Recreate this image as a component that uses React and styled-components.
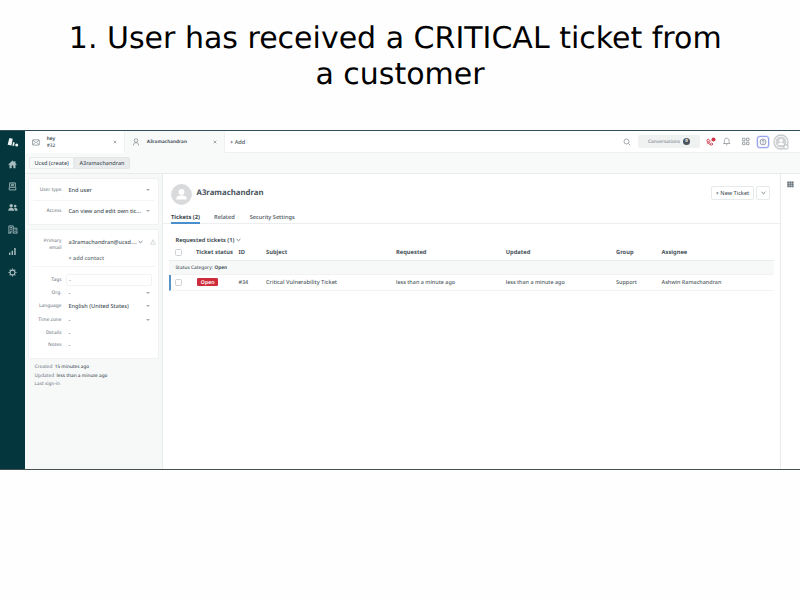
import React from 'react';
import styled, { createGlobalStyle } from 'styled-components';

const Global = createGlobalStyle`
  *, *::before, *::after { box-sizing: border-box; }
  body { margin: 0; background: #fefefe; }
`;

const Slide = styled.main`
  width: 800px;
  height: 600px;
  overflow: hidden;
  background: #fefefe;
  text-rendering: geometricPrecision;
`;
const Title = styled.h1`
  margin: 0;
  height: 130px;
  padding-top: 21px;
  font: 400 30px/36px "DejaVu Sans", sans-serif;
  color: #000;
  text-align: center;
`;
const AppFrame = styled.section`
  display: flex;
  height: 340px;
  border-top: 1px solid #2f4e58;
  border-bottom: 1px solid #45514f;
  background: #fff;
  font-family: "Noto Sans", sans-serif;
  color: #3c4850;
`;
const Rail = styled.nav`
  width: 25px;
  flex: none;
  display: flex;
  flex-direction: column;
  align-items: center;
  padding-top: 1px;
  background: #03363d;
`;
const RailItem = styled.span`
  height: 21.7px;
  display: flex;
  align-items: center;
  justify-content: center;
  svg { display: block; }
`;
const Work = styled.div`
  flex: 1;
  min-width: 0;
  display: flex;
  flex-direction: column;
`;
const Text = styled.span`
  display: block;
  white-space: nowrap;
  font-size: ${p => p.$size || 5.6}px;
  font-weight: ${p => p.$weight || 500};
  line-height: ${p => p.$line || 8}px;
  color: ${p => p.$color || '#4a555d'};
`;

const TopBar = styled.header`
  height: 22px;
  flex: none;
  display: flex;
  border-bottom: 1px solid #eff1f1;
`;
const Tab = styled.div`
  width: ${p => p.$width}px;
  height: 22px;
  display: flex;
  align-items: center;
  padding: 0 7px 0 7px;
  background: ${p => (p.$active ? '#f8f9f9' : '#fff')};
  border-right: 1px solid #f0f2f2;
`;
const TabIcon = styled.span`
  width: ${p => p.$width}px;
  display: flex;
  svg { display: block; }
`;
const TabLabel = styled.div`
  flex: 1;
  padding-top: ${p => p.$drop || 0}px;
`;
const AddTab = styled.div`
  flex: 1;
  display: flex;
  align-items: center;
  padding-left: 5px;
`;
const Tools = styled.div`
  display: flex;
  align-items: center;
  width: 177px;
  svg { display: block; flex: none; }
`;
const Conversations = styled.div`
  width: 62px;
  height: 13px;
  margin: 0 6px 0 7px;
  padding-left: 10px;
  display: flex;
  align-items: center;
  gap: 3px;
  border-radius: 2px;
  background: #f0f2f2;
`;
const Count = styled.span`
  width: 7px;
  height: 7px;
  border-radius: 50%;
  background: #49545c;
  color: #fff;
  font-size: 4.5px;
  font-weight: 700;
  line-height: 7px;
  text-align: center;
`;
const Help = styled.span`
  width: 12px;
  height: 12px;
  margin: 0 0 0 7px;
  display: flex;
  align-items: center;
  justify-content: center;
  border: 1px solid #98a2ea;
  border-radius: 3px;
  box-shadow: 0 0 0 .6px #c9cef5;
  background: #fbfbff;
`;
const CrumbBar = styled.div`
  height: 21px;
  flex: none;
  padding: 4px 4px;
  display: flex;
  background: #f8f9f9;
  border-bottom: 1px solid #e8ebeb;
`;
const Crumb = styled.div`
  width: ${p => p.$width}px;
  height: 12px;
  padding: 1px 0 0 4.5px;
  border: 1px solid ${p => (p.$active ? '#e3e6e7' : '#e9ebed')};
  border-radius: ${p => (p.$active ? '0 2px 2px 0' : '2px 0 0 2px')};
  background: ${p => (p.$active ? '#e9ebed' : '#f9fafa')};
`;
const Body = styled.div`
  flex: 1;
  display: flex;
  min-height: 0;
`;
const Profile = styled.aside`
  width: 138px;
  flex: none;
  padding: 4px 3px 0;
  background: #f7f9f9;
  border-right: 1px solid #e9eced;
`;
const Card = styled.div`
  width: 131px;
  height: ${p => p.$height}px;
  margin-bottom: 4px;
  padding-top: ${p => p.$top || 0}px;
  border: 1px solid #eff1f2;
  border-radius: 2px;
  background: #fff;
`;
const Field = styled.div`
  height: ${p => p.$height}px;
  margin: 0 4px;
  padding-top: ${p => p.$drop || 0}px;
  display: flex;
  align-items: center;
  border-bottom: ${p => (p.$line ? '1px solid #f3f5f5' : '0')};
`;
const FieldName = styled(Text)`
  width: 28.5px;
  margin-right: 7px;
  flex: none;
  text-align: right;
  white-space: normal;
`;
const FieldValue = styled.div`
  flex: 1;
  display: flex;
  align-items: center;
  min-width: 0;
`;
const Caret = styled.i`
  margin-right: 4px;
  border: solid transparent;
  border-width: 2px 2px 0;
  border-top-color: #a3abb1;
`;
const TagBox = styled.div`
  width: 86px;
  height: 12px;
  flex: none;
  margin-left: -2.5px;
  padding: 1px 2px;
  border: 1px solid #f1f3f4;
  border-radius: 2px;
`;
const EmailBlock = styled.div`
  display: flex;
  height: 29.5px;
  margin: 0 3px 0 4px;
  border-bottom: 1px solid #f3f5f5;
`;
const EmailLines = styled.div`flex: 1;`;
const EmailLine = styled.div`
  height: 16px;
  display: flex;
  svg { display: block; flex: none; margin: 2.5px 0 0 1.5px; }
  svg + svg { margin: 1.5px 0 0 7px; }
`;
const Meta = styled.div`
  display: flex;
  height: 8.3px;
  gap: 2.3px;
  padding-left: 6.5px;
`;
const MetaList = styled.div`padding-top: .4px;`;

const Main = styled.section`
  flex: 1;
  min-width: 0;
`;
const PersonBar = styled.div`
  display: flex;
  height: 37px;
  padding: 10px 10px 0 8px;
  svg { display: block; flex: none; }
`;
const PersonName = styled(Text)`
  flex: 1;
  padding: 2.5px 0 0 4.5px;
`;
const Button = styled.div`
  width: ${p => p.$width}px;
  height: 14px;
  margin: 2px 0 0 ${p => p.$gap || 0}px;
  display: flex;
  align-items: center;
  justify-content: center;
  border: 1px solid #e7eaeb;
  border-radius: 2px;
`;
const Tabs = styled.div`
  display: flex;
  height: 13px;
  padding-left: 8px;
  border-bottom: 1px solid #eceeef;
`;
const SubTab = styled.div`
  height: 13px;
  width: ${p => p.$width}px;
  margin-right: ${p => p.$gap}px;
  padding-top: 2px;
  border-bottom: ${p => (p.$active ? '2px solid #4a8fcb' : '0')};
`;
const Tickets = styled.div`padding: 11px 6px 0 6px;`;
const TicketsTitle = styled.div`
  display: flex;
  align-items: center;
  gap: 2px;
  padding-left: 6.5px;
  height: 9px;
`;
const TicketRow = styled.div`
  display: grid;
  grid-template-columns: 20.5px 42.5px 27.5px 130px 109.7px 110.3px 45.6px 1fr;
  align-items: center;
  height: ${p => p.$height}px;
  border-bottom: 1px solid ${p => (p.$soft ? '#f2f4f4' : '#e9eced')};
  border-left: ${p => (p.$marked ? '2px solid #5a93c6' : '0')};
  padding-left: ${p => (p.$marked ? 4.5 : 6.5)}px;
  padding-bottom: ${p => p.$lift || 0}px;
`;
const Checkbox = styled.span`
  width: 7px;
  height: 7px;
  margin-left: -.6px;
  border: 1px solid #cdd2d5;
  border-radius: 1.5px;
`;
const Badge = styled.span`
  width: 21px;
  height: 8.5px;
  margin-left: 1.2px;
  border-radius: 1.3px;
  background: #cf2c3b;
  color: #fff;
  font-size: 5.2px;
  font-weight: 600;
  line-height: 8.2px;
  text-align: center;
`;
const GroupRow = styled.div`
  display: flex;
  gap: 1.5px;
  height: 14px;
  padding: 2.5px 0 0 6.5px;
  background: #f7f9f9;
  border-bottom: 1px solid #f1f3f3;
`;
const AppsRail = styled.aside`
  width: 20px;
  flex: none;
  padding: 6.5px 0 0 6px;
  border-left: 1px solid #e9ebed;
  svg { display: block; }
`;

const muted = '#7d8790';
const iconInk = '#7c868d';

const Chevron = () => (
  <svg width="5" height="4" viewBox="0 0 5 4" fill="none" stroke="#59646c" strokeWidth=".8"><path d="M.6 1l1.9 1.8L4.4 1" /></svg>
);
const Cross = () => (
  <svg width="4" height="4" viewBox="0 0 4 4" stroke="#6b757c" strokeWidth=".6"><path d="M.7.7l2.6 2.6M3.3.7L.7 3.3" /></svg>
);
const Avatar = ({ size }) => (
  <svg width={size} height={size} viewBox="0 0 21 21">
    <circle cx="10.5" cy="10.5" r="10.4" fill="#d9dadb" />
    <circle cx="10.5" cy="8" r="2.9" fill="#fff" />
    <path d="M5.4 15.5v-1.2c0-2 2-2.9 3.4-2.9h3.4c1.5 0 3.4.9 3.4 2.9v1.2z" fill="#fff" />
  </svg>
);

const railIcons = [
  <svg width="13" height="11" viewBox="0 0 13 11" fill="#eef3f3"><path d="M3.400 1l3.300.7-1.200 6.800-3.900-.7z" /><path d="M7 5.100l1.700.4-.6 3.600-1.700-.4z" /><circle cx="10.700" cy="7.900" r="1.500" /></svg>,
  <svg width="9" height="9" viewBox="0 0 9 9" fill="#a9bcbe"><path d="M4.500.6L.3 4.400l.6.700.6-.5v3.600h2.200V5.600h1.600v2.600h2.200V4.600l.6.500.6-.7L7.400 3.100V1.300H6.200v.8z" /></svg>,
  <svg width="9" height="9" viewBox="0 0 9 9" fill="none" stroke="#a9bcbe" strokeWidth=".9"><path d="M1.700.9h5.600v4.400H1.700zM3 2.300h3M3 3.700h3" /><path d="M1.200 5.300v2.600h6.600V5.300" /></svg>,
  <svg width="10" height="9" viewBox="0 0 10 9" fill="#a9bcbe"><circle cx="3.200" cy="2.700" r="1.700" /><path d="M.3 7.700c0-2 1.200-2.900 2.900-2.900s2.900.9 2.900 2.900z" /><circle cx="7.200" cy="3" r="1.300" /><path d="M6.800 7.700c0-1.200-.2-2-.7-2.700 2-.7 3.500.4 3.500 2.700z" /></svg>,
  <svg width="10" height="9" viewBox="0 0 10 9" fill="none" stroke="#a9bcbe" strokeWidth=".9"><path d="M.9 8V.9h4.300V8M5.200 3.200h3.700V8M.3 8.100h3M5 8.100h4.500M2.100 2.500h2M2.100 4.200h2M2.800 8V6h1M6.500 4.900h1.200M6.500 6.400h1.200" /></svg>,
  <svg width="9" height="9" viewBox="0 0 9 9" fill="#a9bcbe"><path d="M1 5.600h1.400V8H1zM3.600 3.800H5V8H3.600zM6.200 1.100h1.500V8H6.200z" /></svg>,
  <svg width="9" height="9" viewBox="0 0 9 9" fill="none" stroke="#a9bcbe"><circle cx="4.500" cy="4.500" r="2.400" strokeWidth="1.100" /><path strokeWidth="1.200" d="M4.500.5v1.300M4.500 7.200v1.300M.5 4.500h1.300M7.200 4.500h1.300M1.700 1.700l.9.9M6.400 6.400l.9.9M7.300 1.700l-.9.9M2.600 6.400l-.9.9" /></svg>,
];

const fields = [
  { name: 'Org.', height: 13, caret: true },
  { name: 'Language', height: 13.4, value: 'English (United States)', caret: true },
  { name: 'Time zone', height: 13.4, caret: true },
  { name: 'Details', height: 12.7 },
  { name: 'Notes', height: 12.4 },
];
const headings = ['Ticket status', 'ID', 'Subject', 'Requested', 'Updated', 'Group', 'Assignee'];
const cells = ['#34', 'Critical Vulnerability Ticket', 'less than a minute ago', 'less than a minute ago', 'Support', 'Ashwin Ramachandran'];

const SideField = ({ name, value = '-', caret, ...rest }) => (
  <Field {...rest}>
    <FieldName $size={4.75} $color={muted}>{name}</FieldName>
    <FieldValue><Text $size={5.6}>{value}</Text></FieldValue>
    {caret && <Caret />}
  </Field>
);

export default function App() {
  return (
    <Slide>
      <Global />
      <Title>1. User has received a CRITICAL ticket from&nbsp;<br />a customer</Title>
      <AppFrame>
        <Rail>{railIcons.map((icon, i) => <RailItem key={i}>{icon}</RailItem>)}</Rail>
        <Work>
          <TopBar>
            <Tab $width={100}>
              <TabIcon $width={14.7}>
                <svg width="8" height="7" viewBox="0 0 8 7" fill="none" stroke={iconInk} strokeWidth=".7"><rect x=".5" y=".8" width="6.800" height="5.300" rx=".6" /><path d="M.7 1.200l3.200 2.500L7.100 1.200M.8 5.800l2-2M7 5.800l-2-2" /></svg>
              </TabIcon>
              <TabLabel $drop={1.4}>
                <Text $size={4.75} $weight={700} $line={7}>hey</Text>
                <Text $size={4.75} $line={7}>#32</Text>
              </TabLabel>
              <Cross />
            </Tab>
            <Tab $width={100} $active>
              <TabIcon $width={14.7}>
                <svg width="8" height="8" viewBox="0 0 8 8" fill="none" stroke={iconInk} strokeWidth=".7"><circle cx="4" cy="2.500" r="1.800" /><path d="M1.400 7.500V7c0-1.500 1-2.300 2.600-2.300S6.600 5.500 6.600 7v.5" /></svg>
              </TabIcon>
              <TabLabel><Text $size={4.69} $weight={700}>A3ramachandran</Text></TabLabel>
              <Cross />
            </Tab>
            <AddTab><Text>+ Add</Text></AddTab>
            <Tools>
              <svg width="8" height="8" viewBox="0 0 8 8" fill="none" stroke={iconInk} strokeWidth=".7"><circle cx="3.500" cy="3.500" r="2.500" /><path d="M5.400 5.400l2 2" /></svg>
              <Conversations><Text $size={4.7} $color="#7f8990">Conversations</Text><Count>0</Count></Conversations>
              <svg width="11" height="10" viewBox="0 0 11 10" fill="none" stroke="#d0485a"><path strokeWidth="1" d="M.8 3.200c.6 2.600 2.300 4.400 5 5l1.200-1.200-1.500-1-.9.600C3.700 6 3.200 5.400 2.800 4.500l.6-.9-1-1.500z" /><path strokeWidth=".7" d="M.8 7L5.500 3.200" /><circle cx="7.500" cy="2.600" r="2" fill="#cf3346" stroke="none" /></svg>
              <svg width="18" height="9" viewBox="-5.500 0 18 9" fill="none" stroke={iconInk} strokeWidth=".7"><path d="M1 6.500h6.400c-.9-.7-.9-1.500-.9-2.900 0-1.500-.9-2.400-2.300-2.400S1.900 2.100 1.900 3.600c0 1.400 0 2.200-.9 2.900zM3.500 7.800h1.400" /></svg>
              <svg width="14.500" height="9" viewBox="-7 0 14.500 9" fill="none" stroke={iconInk} strokeWidth=".7"><path d="M.5 1.200h2.500v2.500H.5zM4.500 1.200h2.500v2.500H4.500zM.5 5.200h2.500v2.500H.5zM4.500 5.200h2.500v2.500H4.500z" /></svg>
              <Help>
                <svg width="8" height="8" viewBox="0 0 8 8" fill="none" stroke="#66717d" strokeWidth=".65"><circle cx="4" cy="4" r="2.900" /><path d="M3.100 3.400c0-1.300 1.800-1.200 1.800 0 0 .6-.9.700-.9 1.300M4 5.300v.6" /></svg>
              </Help>
              <svg width="21" height="18" viewBox="-3 0 21 18"><circle cx="9" cy="9" r="7" fill="#fff" stroke="#c5cacd" strokeWidth="1.300" /><circle cx="9" cy="9" r="5.500" fill="#d0d2d3" /><circle cx="9" cy="7.500" r="1.700" fill="#fff" /><path d="M6 12c0-1.700 1.300-2.300 3-2.300s3 .6 3 2.300z" fill="#fff" /><circle cx="14" cy="14" r="2.200" fill="#fff" stroke="#a5acb1" strokeWidth=".8" /></svg>
            </Tools>
          </TopBar>
          <CrumbBar>
            <Crumb $width={45}><Text $size={5.53}>Ucsd (create)</Text></Crumb>
            <Crumb $width={56} $active><Text $size={5.45}>A3ramachandran</Text></Crumb>
          </CrumbBar>
          <Body>
            <Profile>
              <Card $height={47}>
                <SideField name="User type" value="End user" $height={22} $line caret />
                <SideField name="Access" value="Can view and edit own tic..." $height={20.5} caret />
              </Card>
              <Card $height={130} $top={7.5}>
                <EmailBlock>
                  <FieldName $size={4.7} $color={muted} $line={7}>Primary email</FieldName>
                  <EmailLines>
                    <EmailLine>
                      <Text $size={5.53}>a3ramachandran@ucsd....</Text>
                      <Chevron />
                      <svg width="6" height="6" viewBox="0 0 6 6" fill="none" stroke="#ccd0d3" strokeWidth=".7"><path d="M3 .7L5.500 5.300H.5zM3 2.200v1.500" /></svg>
                    </EmailLine>
                    <Text $size={5.5} $color="#626d75">+ add contact</Text>
                  </EmailLines>
                </EmailBlock>
                <Field $height={19.5} $drop={6}>
                  <FieldName $size={4.75} $color={muted}>Tags</FieldName>
                  <FieldValue><TagBox><Text $color={muted}>-</Text></TagBox></FieldValue>
                </Field>
                {fields.map(f => <SideField key={f.name} name={f.name} value={f.value} caret={f.caret} $height={f.height} />)}
              </Card>
              <MetaList>
                <Meta><Text $size={4.79} $color={muted}>Created</Text><Text $size={4.67}>15 minutes ago</Text></Meta>
                <Meta><Text $size={4.79} $color={muted}>Updated</Text><Text $size={4.69}>less than a minute ago</Text></Meta>
                <Meta><Text $size={4.67} $color={muted}>Last sign-in</Text></Meta>
              </MetaList>
            </Profile>
            <Main>
              <PersonBar>
                <Avatar size={21} />
                <PersonName $size={7.8} $weight={700} $line={12}>A3ramachandran</PersonName>
                <Button $width={43}><Text $size={5.52}>+ New Ticket</Text></Button>
                <Button $width={14} $gap={2}><Chevron /></Button>
              </PersonBar>
              <Tabs>
                <SubTab $width={29} $gap={14} $active><Text $size={5.74} $weight={700} $color="#38444c">Tickets (2)</Text></SubTab>
                <SubTab $width={21} $gap={14.7}><Text $size={5.79}>Related</Text></SubTab>
                <SubTab $width={45}><Text $size={5.63}>Security Settings</Text></SubTab>
              </Tabs>
              <Tickets>
                <TicketsTitle><Text $size={5.64} $weight={700}>Requested tickets (1)</Text><Chevron /></TicketsTitle>
                <TicketRow $height={17}>
                  <Checkbox />
                  {headings.map(h => <Text key={h} $size={5.76} $weight={700}>{h}</Text>)}
                </TicketRow>
                <GroupRow><Text $size={4.76}>Status Category:</Text><Text $size={4.76} $weight={700}>Open</Text></GroupRow>
                <TicketRow $height={16} $lift={1} $marked $soft>
                  <Checkbox />
                  <Badge>Open</Badge>
                  {cells.map((c, i) => <Text key={i} $size={i === 1 ? 5.6 : 5.45} $color="#525d65">{c}</Text>)}
                </TicketRow>
              </Tickets>
            </Main>
            <AppsRail>
              <svg width="7" height="7" viewBox="0 0 7 7" fill="#66717a"><path d="M.3.500h1.900v1.700H.3zM2.500.500h1.900v1.700H2.500zM4.700.500h1.900v1.700H4.700zM.3 2.500h1.900v1.700H.3zM2.500 2.500h1.900v1.700H2.500zM4.700 2.500h1.900v1.700H4.700zM.3 4.500h1.900v1.700H.3zM2.500 4.500h1.900v1.700H2.500zM4.700 4.500h1.900v1.700H4.700z" /></svg>
            </AppsRail>
          </Body>
        </Work>
      </AppFrame>
    </Slide>
  );
}
